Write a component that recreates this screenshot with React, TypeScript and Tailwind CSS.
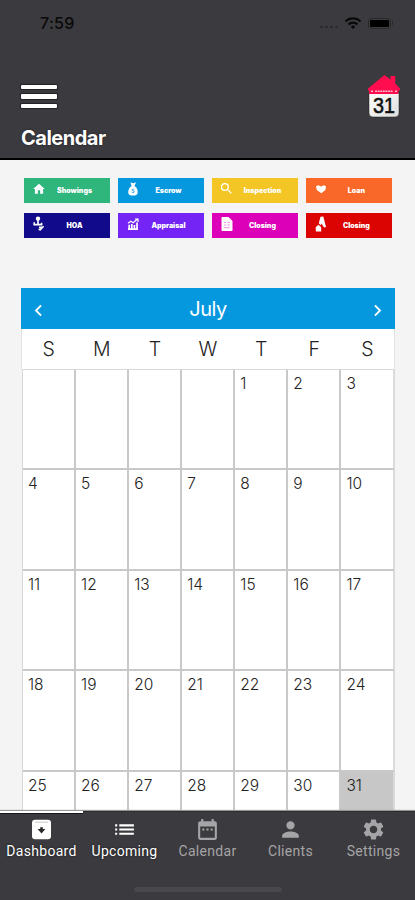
import type { ReactNode } from 'react';
import { MdList, MdDateRange, MdPerson, MdSettings, MdHome, MdSearch, MdWifi, MdChevronLeft, MdChevronRight } from 'react-icons/md';

const MoneyBag = () => (
  <svg width="12" height="14" viewBox="0 0 12 14" fill="#fff">
    <path d="M3.5 0.5L6.5 1.2 9 0.3 7.5 4C10 5.5 11 8 10.6 11 10.3 13 8.8 13.5 6 13.5S1.6 13 1.3 11C1 8 2.2 5.5 4.6 4Z" />
    <path d="M7.2 7.6C6 6.9 4.9 7.3 5.1 8.1s2.1.7 2.1 1.6S5.5 11 4.8 10.3" fill="none" stroke="#0698de" strokeWidth="0.9" />
  </svg>
);

const HandCoin = () => (
  <svg width="12" height="15" viewBox="0 0 12 15" fill="none" stroke="#fff" strokeWidth="1.6">
    <circle cx="5" cy="2.6" r="1.4" fill="#fff" />
    <path d="M5 3v5M1.2 6.2v2.4h7.4V6.8M5.6 13.2l1.6 0.6 3.4-3.6M6 11.4h3" />
  </svg>
);

const Growth = () => (
  <svg width="12" height="12" viewBox="0 0 12 12" fill="none" stroke="#fff" strokeWidth="1.2">
    <path d="M1 5.2l2.8-2 2.4 1.5L10.5 1M8 1h3v3" />
    <path d="M1 11.2h10M2.2 11V6.8M4.8 11V6M7.4 11V7M10 11V4.5" strokeWidth="1.7" />
  </svg>
);

const Sheet = () => (
  <svg width="12" height="14" viewBox="0 0 12 14">
    <path d="M1.5 0h6L11.5 4v9c0 .6-.4 1-1 1h-9c-.6 0-1-.4-1-1V1c0-.6.4-1 1-1z" fill="#fff" />
    <path d="M3 5.5h2M6.3 5.5h2.5M3 8h2M6.3 8h2.5M3 10.7h5.8" stroke="#dc00b8" strokeWidth="0.7" opacity=".6" />
  </svg>
);

const Heart = () => (
  <svg width="12" height="10" viewBox="0 0 12 10" fill="#fff">
    <path d="M1 2.3L3.3 1.2 6 2.6 8.7 1.2 11 2.3 10.4 6 6.3 9.2 1.8 6Z" />
  </svg>
);

const Keys = () => (
  <svg width="12" height="16" viewBox="0 0 12 16" fill="#fff">
    <path d="M5.5.8L8.3.5 11 11 9 11.6 6.5 7.5 5.7 9.2 3.8 7.3Z" />
    <path d="M.7 11.2L3.4 8.8 6.2 11.2V15.5H.9Z" />
  </svg>
);

type Category = { label: string; color: string; icon: ReactNode };

const categories: Category[] = [
  { label: 'Showings', color: 'bg-[#2eb67d]', icon: <MdHome size={14} /> },
  { label: 'Escrow', color: 'bg-[#0698de]', icon: <MoneyBag /> },
  { label: 'Inspection', color: 'bg-[#f3c626]', icon: <MdSearch size={15} /> },
  { label: 'Loan', color: 'bg-[#fa6829]', icon: <Heart /> },
  { label: 'HOA', color: 'bg-[#110b8c]', icon: <HandCoin /> },
  { label: 'Appraisal', color: 'bg-[#7424f5]', icon: <Growth /> },
  { label: 'Closing', color: 'bg-[#dc00b8]', icon: <Sheet /> },
  { label: 'Closing', color: 'bg-[#dc0303]', icon: <Keys /> },
];

const weekDays = ['S', 'M', 'T', 'W', 'T', 'F', 'S'];

// July starts on a Thursday
const days = Array.from({ length: 35 }, (_, i) => (i < 4 ? null : i - 3));

const DashboardIcon = ({ size }: { size: number }) => (
  <svg width={size} height={size} viewBox="0 0 25 25">
    <rect x="3" y="2.8" width="19" height="19.4" rx="3" fill="#fff" />
    <path d="M6 5.2h13" stroke="#bbb" strokeWidth="0.8" />
    <path d="M11.2 10.2h2.6v1.8h2.6L12.5 16.4 8.6 12h2.6z" fill="#2b2a2d" />
  </svg>
);

const tabs = [
  { label: 'Dashboard', icon: DashboardIcon, active: true },
  { label: 'Upcoming', icon: MdList, active: true },
  { label: 'Calendar', icon: MdDateRange, active: false },
  { label: 'Clients', icon: MdPerson, active: false },
  { label: 'Settings', icon: MdSettings, active: false },
];

const Logo = () => (
  <svg width="34" height="46" viewBox="0 0 34 46">
    <defs>
      <linearGradient id="page" x1="0" x2="1" y1="0" y2="1">
        <stop offset="0" stopColor="#fff" />
        <stop offset="1" stopColor="#ddd" />
      </linearGradient>
    </defs>
    <path d="M2 19h30v20a4 4 0 0 1-4 4H6a4 4 0 0 1-4-4z" fill="url(#page)" stroke="#222" strokeWidth="0.5" />
    <path d="M17.5 1L23.5 5.5V2H28.2V9.5L33 14.5V16.5H31.5V20H2V16.5H1V14.5Z" fill="#ff0d4f" />
    <path d="M4 17.2h2M8 17.2h18M28 17.2h2" stroke="#ffb5c8" strokeWidth="1.6" strokeDasharray="2 .6" />
    <text x="17" y="38.5" textAnchor="middle" fontFamily="Liberation Sans, sans-serif" fontSize="22.5" fill="#111" stroke="#111" strokeWidth="0.6" textLength="22" lengthAdjust="spacingAndGlyphs">31</text>
  </svg>
);

const Header = () => (
  <header className="h-[160px] shrink-0 bg-[#3b3a3e] border-b-2 border-black">
    <div className="h-[46px] pt-[13px] pl-10 pr-[22px] flex items-start justify-between text-[#09090a]">
      <span className="text-[16px] leading-[21px] font-medium tracking-[0.3px]">7:59</span>
      <div className="flex items-center h-[20px]">
        <div className="flex gap-[2px] mr-[6px] mt-[7px]">
          {[0, 1, 2, 3].map((dot) => (
            <span key={dot} className="w-[3px] h-[2px] rounded-full bg-[#2a292c]" />
          ))}
        </div>
        <MdWifi size={18} />
        <div className="ml-[6px] w-[23px] h-[11px] rounded-[3px] border border-[#29282b] p-px">
          <div className="h-full w-full rounded-[1px] bg-black" />
        </div>
        <span className="ml-px w-px h-[4px] bg-[#29282b]" />
      </div>
    </div>
    <div className="flex justify-between pl-[21px] pr-[14px] pt-[28px]">
      <div className="flex flex-col gap-[5px] mt-[11px]">
        {[0, 1, 2].map((line) => (
          <span key={line} className="block w-[36px] h-[4.4px] rounded-[1px] bg-white shadow-[0_0_1px_1px_#222125]" />
        ))}
      </div>
      <Logo />
    </div>
    <h1 className="pl-[21px] mt-[5px] text-[20px] leading-[26px] font-bold text-white tracking-[-0.5px] [text-shadow:0_0_2px_#18171a]">Calendar</h1>
  </header>
);

const Calendar = () => (
  <section className="ml-[21px] w-[374px] mt-[50.5px]">
    <div className="h-[40.5px] bg-[#0698de] text-white flex items-center justify-between px-[6px]">
      <MdChevronLeft size={23} className="mt-[4px]" />
      <span className="mt-[2px] text-[20px] tracking-[-0.5px]">July</span>
      <MdChevronRight size={23} className="mt-[4px]" />
    </div>
    <div className="h-[40px] pt-[2px] grid grid-cols-7 items-center bg-white border-x border-[#e2e2e2] text-center text-[19.5px] font-light text-[#222]">
      {weekDays.map((day, i) => (
        <span key={i}>{day}</span>
      ))}
    </div>
    <div className="ml-px w-[372.5px] grid grid-cols-7 border-l border-t border-[#d8d8d8]">
      {days.map((day, i) => (
        <div
          key={i}
          className={`h-[100.6px] border-r-2 border-b-2 border-[#c9c9c9] pl-[5px] pt-[4px] text-[15.5px] leading-[20px] font-light text-[#222] ${i % 7 === 6 ? 'border-r-[#dadada]' : ''} ${day === 31 ? 'bg-[#c7c7c7]' : 'bg-white'}`}
        >
          {day}
        </div>
      ))}
    </div>
  </section>
);

const TabBar = () => (
  <nav className="h-[89px] shrink-0 bg-[#3b3a3e] border-t border-[#2b2a2d] shadow-[0_-1px_1px_#999] relative">
    <span className="absolute -top-px left-0 w-[83px] h-[2px] bg-white border-b border-[#18171a] box-content" />
    <div className="grid grid-cols-5 pt-[5px]">
      {tabs.map(({ label, icon: Icon, active }) => (
        <div key={label} className={`flex flex-col items-center ${active ? 'text-white [text-shadow:0_0_2px_#111]' : 'text-[#a5a4a6]'}`}>
          <Icon size={25} />
          <span className="text-[14px] leading-[18px] tracking-[0.3px] font-[Roboto,sans-serif]">{label}</span>
        </div>
      ))}
    </div>
    <span className="block w-[148px] h-[5px] mx-auto mt-[27px] rounded-full bg-[#49484b]" />
  </nav>
);

export default function App() {
  return (
    <div className="h-[900px] w-[415px] overflow-hidden flex flex-col bg-[#f4f4f4] font-[Inter,sans-serif]">
      <Header />
      <main className="flex-1 min-h-0 overflow-hidden">
        <div className="grid grid-cols-4 gap-x-[7.8px] gap-y-[10px] ml-6 w-[368px] pt-[17.5px]">
          {categories.map(({ label, color, icon }, i) => (
            <div key={i} className={`h-[25px] flex items-center text-white ${color}`}>
              <span className="w-[30px] flex justify-center pb-[3px]">{icon}</span>
              <span className="flex-1 text-center pr-[15px] text-[7px] font-black leading-none">{label}</span>
            </div>
          ))}
        </div>
        <Calendar />
      </main>
      <TabBar />
    </div>
  );
}
